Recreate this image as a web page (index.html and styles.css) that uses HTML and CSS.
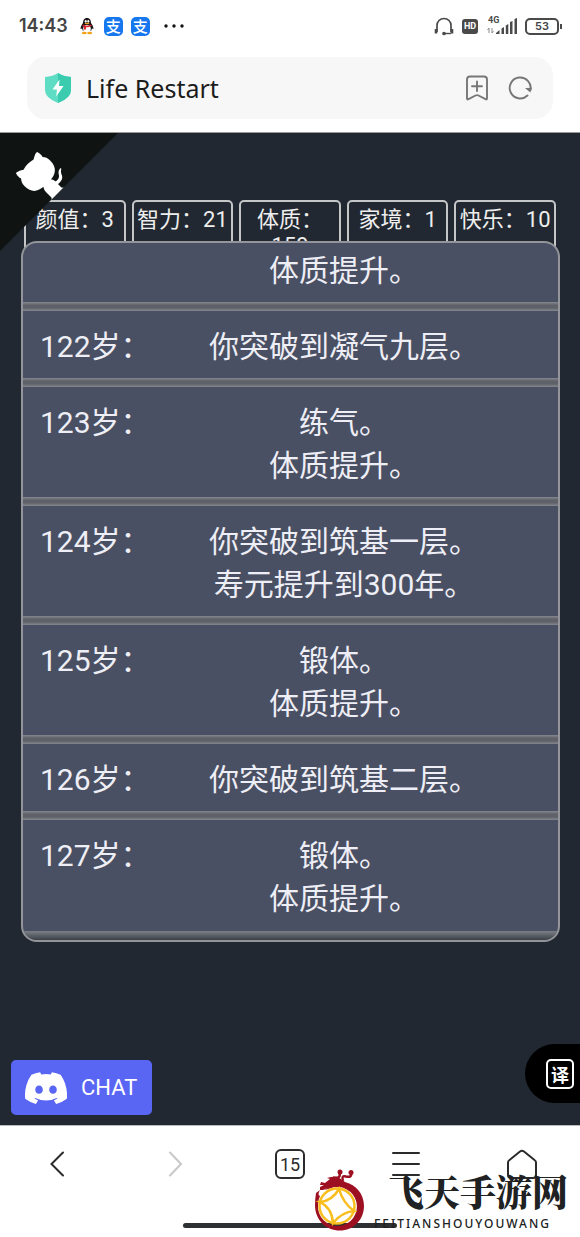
FILE: index.html
```html
<!DOCTYPE html>
<html lang="zh-CN">
<head>
<meta charset="utf-8">
<meta name="viewport" content="width=device-width, initial-scale=1">
<title>Life Restart</title>
<link rel="stylesheet" href="styles.css">
</head>
<body>
<header class="top">
  <div class="status">
    <span class="clock">14:43</span>
    <svg class="qq" width="16" height="18" viewBox="0 0 16 18" aria-hidden="true">
      <path d="M8 1C5 1 4 3.500 4 6C2.500 8 1.500 10 1.500 12L3 11.500L4 14H12L13 11.500L14.500 12C14.500 10 13.500 8 12 6C12 3.500 11 1 8 1Z" fill="#1b1718"/>
      <ellipse cx="8" cy="12" rx="3.800" ry="4" fill="#fff"/>
      <ellipse cx="6.700" cy="4.300" rx="1" ry="1.400" fill="#fff"/><ellipse cx="9.300" cy="4.300" rx="1" ry="1.400" fill="#fff"/>
      <ellipse cx="8" cy="6.500" rx="2.400" ry=".8" fill="#f5a21b"/>
      <path d="M3.800 7.500Q8 10 12.200 7.500L12.500 9Q9.500 10.500 7 10.200V12.500H5V9.700L3.500 9Z" fill="#e3222b"/>
      <ellipse cx="5.300" cy="16" rx="2.500" ry="1.200" fill="#f5a21b"/><ellipse cx="10.700" cy="16" rx="2.500" ry="1.200" fill="#f5a21b"/>
    </svg>
    <span class="pay">支</span>
    <span class="pay">支</span>
    <svg class="more" width="20" height="4" viewBox="0 0 20 4" fill="#111" aria-hidden="true"><circle cx="2" cy="2" r="1.700"/><circle cx="10" cy="2" r="1.700"/><circle cx="18" cy="2" r="1.700"/></svg>
    <div class="signals">
      <svg width="20" height="19" viewBox="0 0 20 19" fill="none" stroke="#4a4a4a" stroke-width="1.700" aria-hidden="true">
        <path d="M3 15V8.500C3 4.500 6 1.500 10 1.500S17 4.500 17 8.500V15"/><path d="M2 12V16.500M18 12V16.500" stroke-width="2.600"/><path d="M17 16.500H10.500" stroke-width="1.400"/><circle cx="10" cy="16.500" r="1" fill="#4a4a4a"/>
      </svg>
      <span class="hd">HD</span>
      <div class="cell">
        <span class="net">4G</span>
        <svg width="30" height="18" viewBox="0 0 30 18" aria-hidden="true">
          <path d="M2 16V11L.5 13M5 11V16L6.500 14" fill="none" stroke="#8b8b8b"/>
          <path d="M9 17V16L12.500 13V17ZM14.500 17V11.500L17 10V17ZM18.800 17V8.500L21.300 7V17ZM23 17V5L25.500 4V17ZM27.500 17V2L30 1V17Z" fill="#4a4a4a"/>
        </svg>
      </div>
      <div class="battery"><span class="level">53</span></div>
    </div>
  </div>
  <div class="address">
    <svg width="28" height="32" viewBox="0 0 28 32" aria-hidden="true">
      <path d="M14 1Q19 4.500 27 5V18Q27 26 14 31Q1 26 1 18V5Q9 4.500 14 1Z" fill="#5fdcc4"/><path d="M14 1Q19 4.500 27 5V18Q27 26 14 31Z" fill="#3bccb0"/>
      <path d="M15.500 7.500L8.500 17.500H13L12.200 24.500L19.500 14H15Z" fill="#fff"/>
    </svg>
    <span class="title">Life Restart</span>
    <button class="tool" aria-label="Bookmark"><svg width="24" height="26" viewBox="0 0 24 26" fill="none" stroke="#777" stroke-width="1.900" stroke-linejoin="round" stroke-linecap="round"><path d="M5 1.500H19Q22 1.500 22 4.500V23.500Q22 25 20.500 24.200L13.500 20.500Q12 19.800 10.500 20.500L3.500 24.200Q2 25 2 23.500V4.500Q2 1.500 5 1.500Z"/><path d="M12 6.500V16M7 11.200H17"/></svg></button>
    <button class="tool" aria-label="Reload"><svg width="24" height="24" viewBox="0 0 24 24" fill="none" stroke="#777" stroke-width="1.900" stroke-linecap="round"><path d="M19.500 19.500A10.500 10.500 0 1 1 22.500 14"/><path d="M18.500 12.500L23 12.300L22 15.500Z" fill="#777" stroke-width="1.200"/></svg></button>
  </div>
</header>
<main class="game">
  <a class="corner" href="#" aria-label="GitHub">
    <svg width="118" height="118" viewBox="0 0 250 250"><g transform="matrix(-1 0 0 1 250 0)">
      <path fill="#0f1412" d="M0 0L250 250V0Z"/>
      <path fill="#fff" d="M128.300 109C113.800 99.700 119 89.600 119 89.600C122 82.700 120.500 78.600 120.500 78.600C119.200 72 123.400 76.300 123.400 76.300C127.300 80.900 125.500 87.300 125.500 87.300C122.900 97.600 130.600 101.900 134.400 103.200"/>
      <path fill="#fff" d="M115 115C114.900 115.100 118.700 116.500 119.800 115.400L133.700 101.600C136.900 99.200 139.900 98.400 142.200 98.600C133.800 88 127.500 74.400 143.800 58C148.500 53.400 154 51.200 159.700 51C160.300 49.400 163.200 43.600 171.400 40.100C171.400 40.100 176.100 42.500 178.800 56.200C183.100 58.600 187.200 61.800 190.900 65.400C194.500 69 197.700 73.200 200.100 77.600C213.800 80.200 216.300 84.900 216.300 84.900C212.700 93.100 206.900 96 205.400 96.600C205.100 102.400 203 107.800 198.300 112.500C181.900 128.900 168.300 122.500 157.700 114.100C157.900 116.900 156.700 120.900 152.700 124.900L141 136.500C139.800 137.700 141.600 141.900 141.800 141.800Z"/>
    </g></svg>
  </a>
  <ul class="stats">
    <li class="stat">颜值：3</li>
    <li class="stat">智力：21</li>
    <li class="stat">体质：159</li>
    <li class="stat">家境：1</li>
    <li class="stat">快乐：10</li>
  </ul>
  <ol class="life">
    <li class="year year-cut"><span class="age"></span><span class="event">体质提升。</span></li>
    <li class="year"><span class="age">122岁：</span><span class="event">你突破到凝气九层。</span></li>
    <li class="year"><span class="age">123岁：</span><span class="event">练气。<br>体质提升。</span></li>
    <li class="year"><span class="age">124岁：</span><span class="event">你突破到筑基一层。<br>寿元提升到300年。</span></li>
    <li class="year"><span class="age">125岁：</span><span class="event">锻体。<br>体质提升。</span></li>
    <li class="year"><span class="age">126岁：</span><span class="event">你突破到筑基二层。</span></li>
    <li class="year"><span class="age">127岁：</span><span class="event">锻体。<br>体质提升。</span></li>
  </ol>
  <div class="floating">
    <button class="chat">
      <svg width="42" height="32" viewBox="0 0 127 96" fill="#fff" aria-hidden="true"><path d="M107.700 8.070A105.150 105.150 0 0 0 81.470 0a72.060 72.060 0 0 0-3.360 6.830 97.680 97.680 0 0 0-29.110 0A72.370 72.370 0 0 0 45.640 0a105.890 105.890 0 0 0-26.250 8.090C2.790 32.650-1.710 56.600.540 80.210a105.730 105.730 0 0 0 32.170 16.150 77.700 77.700 0 0 0 6.890-11.110 68.420 68.420 0 0 1-10.850-5.180c.910-.660 1.800-1.340 2.660-2a75.570 75.570 0 0 0 64.320 0c.870.710 1.760 1.390 2.660 2a68.680 68.680 0 0 1-10.870 5.190 77 77 0 0 0 6.890 11.100 105.250 105.250 0 0 0 32.190-16.140c2.640-27.380-4.510-51.110-18.900-72.150ZM42.450 65.690C36.180 65.690 31 60 31 53s5-12.740 11.430-12.740S54 46 53.890 53s-5.050 12.690-11.440 12.690Zm42.240 0C78.410 65.690 73.250 60 73.250 53s5-12.740 11.440-12.740S96.230 46 96.120 53s-5.040 12.690-11.430 12.690Z"/></svg>
      CHAT
    </button>
    <button class="translate" aria-label="翻译"><span class="glyph">译</span></button>
  </div>
</main>
<footer class="bottom">
  <nav class="nav">
    <button class="key" aria-label="Back"><svg width="16" height="28" viewBox="0 0 16 28" fill="none" stroke="#2b2b2b" stroke-width="2" stroke-linecap="round"><path d="M13 2.500L1.500 14L13 25.500"/></svg></button>
    <button class="key" aria-label="Forward"><svg width="16" height="28" viewBox="0 0 16 28" fill="none" stroke="#c9c9c9" stroke-width="2" stroke-linecap="round"><path d="M4 2.500L15 14L4 25.500"/></svg></button>
    <button class="key"><span class="tabs">15</span></button>
    <button class="key" aria-label="Menu"><svg width="28" height="26" viewBox="0 0 28 26" stroke="#2b2b2b" stroke-width="2" stroke-linecap="round"><path d="M1 2H27M1 13H27M1 24H27"/></svg></button>
    <button class="key" aria-label="Home"><svg width="30" height="30" viewBox="0 0 30 30" fill="none" stroke="#2b2b2b" stroke-width="2" stroke-linejoin="round"><path d="M1 13.500Q1 12 2.500 11L13 2.500Q15 1 17 2.500L27.500 11Q29 12 29 13.500V26Q29 29 26 29H4Q1 29 1 26Z"/></svg></button>
  </nav>
  <div class="indicator"></div>
  <div class="brand">
    <svg width="50" height="64" viewBox="0 0 50 64" aria-hidden="true">
      <circle cx="22" cy="37" r="18" fill="#fff"/>
      <path d="M30 13C42 16 49 26 49 37C49 51 38 61.500 25 61.500C11 61.500 0 51 0 36Q0 30 1 24L5 21Q2 26 5 27Q3 31 3 36A19.500 19.500 0 1 0 15 19.500L9 21L13 18.500L8 21H5V18L9 16H5L6 13L10 14L15 10L12 9Q18 7 23 8Z" fill="#9d1022"/>
      <path d="M18 8.500Q27 10 24 3M28 12Q26 6 31 7.500Q37 9 36 4" fill="none" stroke="#9d1022" stroke-width="2.500"/>
      <circle cx="25" cy="3" r="2.500" fill="#9d1022"/><circle cx="36" cy="3.500" r="2.500" fill="#9d1022"/>
      <g fill="none" stroke="#f9bd1e" stroke-width="2.500"><circle cx="22" cy="37" r="17.500"/><path d="M24 20Q17 32 5 33Q17 39 18 54Q27 43 39 42Q28 34 24 20Z"/></g>
    </svg>
    <div class="words"><span class="name">飞天手游网</span><span class="latin">FEITIANSHOUYOUWANG</span></div>
  </div>
</footer>
</body>
</html>
```
FILE: styles.css
```css
* { box-sizing: border-box; }
body {
  margin: 0;
  min-height: 100vh;
  display: flex;
  flex-direction: column;
  background: #fff;
  font-family: Roboto, "Noto Sans CJK SC", sans-serif;
  overflow-x: hidden;
}
button { border: 0; padding: 0; margin: 0; background: none; font: inherit; color: inherit; }
svg { display: block; flex: none; }
ul, ol { list-style: none; margin: 0; padding: 0; }

.top { padding: 10px 27px 13px; border-bottom: 1px solid #999; }
.status { height: 32px; margin: 0 -8px 15px; display: flex; align-items: center; }
.clock { font: 600 18px/24px Inter, sans-serif; color: #444; }
.qq { margin: 0 9px 0 11px; }
.pay {
  width: 19px; height: 19px; margin-right: 8px; border-radius: 5px;
  background: #1677ee; color: #fff; text-align: center;
  font: 500 15px/18px "Noto Sans CJK SC", sans-serif;
}
.more { margin-left: 6px; }
.signals { margin-left: auto; display: flex; align-items: center; gap: 8px; }
.hd { width: 16px; height: 15px; border-radius: 3px; background: #4a4a4a; color: #fff; font: 700 9px/15px Roboto, sans-serif; text-align: center; }
.cell { position: relative; margin-left: 1px; }
.net { position: absolute; left: 1px; top: -2px; font: 700 9px/10px Roboto, sans-serif; color: #4a4a4a; }
.battery { position: relative; width: 34px; height: 17px; border: 2px solid #4a4a4a; border-radius: 5px; text-align: center; margin-right: 2px; }
.battery::after { content: ""; position: absolute; right: -5px; top: 4px; width: 2px; height: 5px; background: #4a4a4a; }
.level { display: block; font: 600 11px/13px Inter, sans-serif; color: #444; }

.address { height: 62px; padding: 0 21px 0 17px; border-radius: 18px; background: #f7f7f7; display: flex; align-items: center; }
.title { flex: 1; margin-left: 14px; font: 25px/32px "Noto Sans", sans-serif; color: #1c1c1c; }
.tool { margin-left: 19px; }

.game { position: relative; flex: 1; display: flex; flex-direction: column; padding: 67px 0 10px; background: #222831; color: #eee; }
.corner { position: absolute; left: 0; top: 0; z-index: 1; }
.stats { display: grid; grid-template-columns: repeat(5, 1fr); gap: 6px; padding: 0 24px; }
.stat { padding: 5px 0 3px; border: 2px solid #c4c6c8; border-radius: 5px; font-size: 22px; line-height: 26px; text-align: center; }
.life {
  position: relative; z-index: 2; margin: -23px 20px 0 21px; overflow: hidden;
  border: 2px solid #93959a; border-radius: 16px; background: #4a5063;
}
.year {
  display: flex; padding: 14px 22px 19px 17px;
  background: linear-gradient(#85888e, #5e6167 35%, #5e6167 65%, #85888e) bottom / 100% 9px no-repeat;
  font-size: 30px; line-height: 43px; color: #eeeef6;
}
.year:last-child { background-image: linear-gradient(#7c7f86, #3b4048); padding-bottom: 20px; }
.year-cut { padding-top: 6px; }
.age { flex: 0 0 112px; white-space: nowrap; }
.event { flex: 1; text-align: center; }

.floating { margin-top: auto; padding-left: 11px; display: flex; justify-content: space-between; align-items: flex-end; }
.chat { width: 141px; height: 55px; padding-left: 14px; display: flex; align-items: center; gap: 14px; border-radius: 5px; background: #5965f3; color: #fff; font-size: 22px; line-height: 28px; }
.translate { width: 55px; height: 59px; margin-bottom: 12px; padding-left: 21px; border-radius: 30px 0 0 30px; background: #000; }
.glyph { display: block; width: 28px; height: 30px; border: 2px solid #fff; border-radius: 5px; color: #fff; font: 700 18px/26px "Noto Sans CJK SC", sans-serif; text-align: center; }

.bottom { position: relative; height: 112px; border-top: 1px solid #bbb; background: #fff; }
.nav { display: grid; grid-template-columns: repeat(5, 1fr); height: 76px; }
.key { display: flex; align-items: center; justify-content: center; }
.tabs { width: 30px; height: 30px; border: 2px solid #2b2b2b; border-radius: 6px; font: 18px/27px Roboto, sans-serif; color: #2b2b2b; }
.indicator { width: 37%; height: 5px; margin: 21px auto 0; border-radius: 3px; background: #2e3031; }
.brand { position: absolute; right: 12px; top: 43px; display: flex; gap: 9px; }
.words { display: flex; flex-direction: column; width: 194px; color: #202122; }
.name { align-self: flex-end; font: 900 36px/44px "Noto Serif CJK SC", "Noto Sans CJK SC", serif; }
.latin { margin-top: 3px; font: 500 12px/16px "Noto Sans", sans-serif; letter-spacing: 2px; }
```
